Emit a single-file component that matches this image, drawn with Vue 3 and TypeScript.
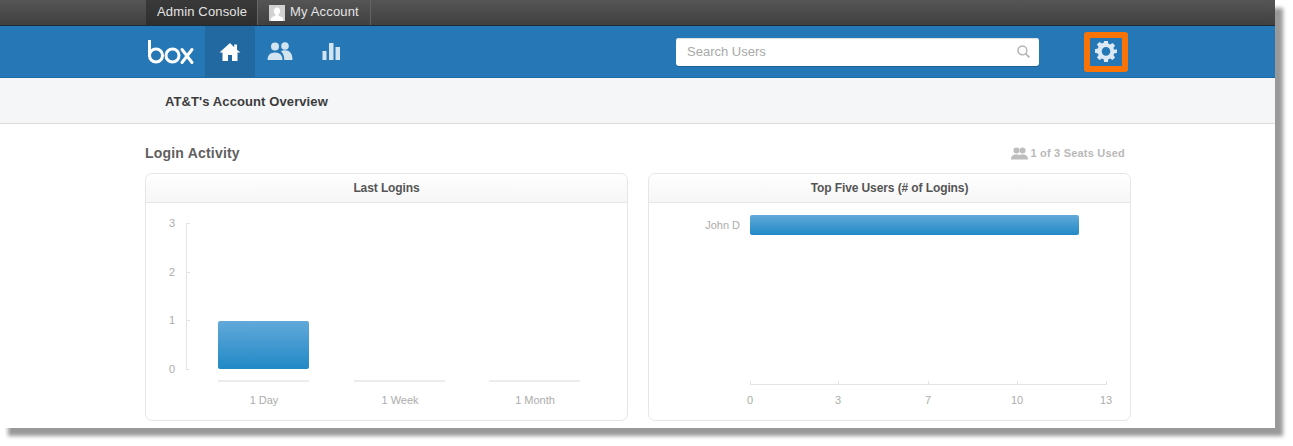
<script setup lang="ts">
// coordinates inside each chart svg (481 x 217)
const yTicks = [
  { label: '3', y: 20 },
  { label: '2', y: 69 },
  { label: '1', y: 117 },
  { label: '0', y: 166 },
]
const columns = [
  { label: '1 Day', x: 72, value: 1 },
  { label: '1 Week', x: 208, value: 0 },
  { label: '1 Month', x: 343, value: 0 },
]
const xTicks = [
  { label: '0', x: 101 },
  { label: '3', x: 189 },
  { label: '7', x: 279 },
  { label: '10', x: 368 },
  { label: '13', x: 457 },
]
</script>

<template>
  <div class="page">
    <div class="window">
      <div class="topbar">
        <a class="tab tab-active">Admin Console</a>
        <a class="tab">
          <svg class="avatar" width="16" height="16" viewBox="0 0 16 16">
            <rect width="16" height="16" fill="#d2d2d2" />
            <path d="M8 2.500c2 0 3.200 1.600 3.200 3.600 0 1.500-.7 2.800-1.600 3.500v1.200c1.700.6 3.400 1.300 4.400 2.200V16H2v-3c1-.9 2.700-1.600 4.400-2.200V9.600C5.500 8.900 4.800 7.600 4.800 6.100 4.800 4.100 6 2.500 8 2.500z" fill="#fff" />
          </svg>
          My Account
        </a>
      </div>

      <header class="nav">
        <svg class="logo" width="48" height="26" viewBox="0 0 48 26" fill="none" stroke="#fff" stroke-width="3">
          <path d="M2.500 1v14" stroke-linecap="round" />
          <circle cx="9" cy="15.500" r="6.500" />
          <circle cx="25.500" cy="15.500" r="6.500" />
          <path d="M35 9.500l10 13M45 9.500l-10 13" stroke-linecap="round" />
        </svg>
        <a class="nav-item nav-item-active">
          <svg width="22" height="20" viewBox="0 0 22 20" fill="#fff">
            <path d="M11 1L0.500 10.500h3V19h5.500v-6h4v6h5.500v-8.500h3L18 7.800V2.500h-2.800v2.800z" />
          </svg>
        </a>
        <a class="nav-item">
          <svg width="26" height="19" viewBox="0 0 26 19" fill="#d3e4f1">
            <circle cx="8" cy="4.500" r="4" />
            <circle cx="18" cy="4" r="3.800" />
            <path d="M0.500 18c0-4.500 2.500-7.500 7.500-7.500s7.500 3 7.500 7.500z" />
            <path d="M14 9.300c1-.8 2.400-1.100 4-1.100 5 0 7.500 3.300 7.500 9.800h-8.200c0-3.600-1.100-6.700-3.300-8.700z" />
          </svg>
        </a>
        <a class="nav-item nav-item-bars">
          <svg width="20" height="19" viewBox="0 0 20 19" fill="#d3e4f1">
            <rect x="1.500" y="9" width="4" height="9" />
            <rect x="8" y="1" width="4.500" height="17" />
            <rect x="14.500" y="5" width="4.500" height="13" />
          </svg>
        </a>

        <div class="search">
          <span>Search Users</span>
          <svg width="13" height="13" viewBox="0 0 14 14" fill="none" stroke="#b5b5b5" stroke-width="1.600">
            <circle cx="5.800" cy="5.800" r="4.800" />
            <path d="M9.300 9.300l4 4" stroke-width="2" />
          </svg>
        </div>

        <div class="gear-box">
          <svg width="22" height="22" viewBox="0 0 24 24" fill="#dce9f4">
            <path fill-rule="evenodd" d="M10 1h4l.6 3.200 1.800.8 2.700-1.800 2.800 2.800-1.800 2.700.8 1.800L24 10v4l-3.100.6-.8 1.800 1.800 2.700-2.800 2.800-2.700-1.800-1.800.8L14 24h-4l-.6-3.100-1.800-.8-2.700 1.800-2.800-2.800 1.800-2.700-.8-1.800L0 14v-4l3.100-.6.800-1.800-1.800-2.700 2.800-2.800 2.700 1.800 1.800-.8zM12 7.700a4.700 4.700 0 1 0 0 9.400 4.700 4.700 0 0 0 0-9.400z" />
          </svg>
        </div>
      </header>

      <div class="subhead">AT&amp;T's Account Overview</div>

      <main class="content">
        <div class="section-head">
          <h2>Login Activity</h2>
          <div class="seats">
            <svg width="17" height="13" viewBox="0 0 17 13" fill="#bdbdbd">
              <circle cx="5.500" cy="3.500" r="3" />
              <circle cx="11.500" cy="3.500" r="3" />
              <path d="M0 12.500c0-3 1.500-5 5.500-5 1 0 1.900.1 2.600.4.700-.3 2.400-.4 3.400-.4 4 0 5.500 2 5.500 5z" />
            </svg>
            1 of 3 Seats Used
          </div>
        </div>

        <div class="cards">
          <section class="card">
            <div class="card-title">Last Logins</div>
            <svg class="chart" width="481" height="217" viewBox="0 0 481 217">
              <path class="axis" d="M44 20h-4v146h4M40 69h4M40 117h4" />
              <text v-for="t in yTicks" :key="t.label" class="tick" x="26" :y="t.y + 4" text-anchor="middle">{{ t.label }}</text>
              <g v-for="c in columns" :key="c.label">
                <rect v-if="c.value" :x="c.x" :y="166 - c.value * 48" width="91" :height="c.value * 48" rx="2" fill="url(#barV)" />
                <rect :x="c.x" y="177" width="91" height="2" fill="#ececec" />
                <text class="tick" :x="c.x + 46" y="201" text-anchor="middle">{{ c.label }}</text>
              </g>
              <defs>
                <linearGradient id="barV" x1="0" y1="0" x2="0" y2="1">
                  <stop offset="0" stop-color="#62a9da" />
                  <stop offset="1" stop-color="#2189c6" />
                </linearGradient>
              </defs>
            </svg>
          </section>

          <section class="card">
            <div class="card-title">Top Five Users (# of Logins)</div>
            <svg class="chart" width="481" height="217" viewBox="0 0 481 217">
              <text class="tick" x="91" y="26" text-anchor="end">John D</text>
              <rect x="101" y="12" width="329" height="20" rx="2" fill="url(#barH)" />
              <path class="axis" d="M101 178v3h356v-3M189 178v3M279 178v3M368 178v3" />
              <text v-for="t in xTicks" :key="t.label" class="tick" :x="t.x" y="201" text-anchor="middle">{{ t.label }}</text>
              <defs>
                <linearGradient id="barH" x1="0" y1="0" x2="0" y2="1">
                  <stop offset="0" stop-color="#62a9da" />
                  <stop offset="1" stop-color="#2189c6" />
                </linearGradient>
              </defs>
            </svg>
          </section>
        </div>
      </main>
    </div>
  </div>
</template>

<style>
html,
body {
  margin: 0;
  background: #fff;
}
</style>

<style scoped>
.page {
  width: 1293px;
  height: 446px;
  overflow: hidden;
}

.window {
  width: 1275px;
  height: 428px;
  overflow: hidden;
  background: #fff;
  box-shadow: 8px 8px 4px #999;
  font-family: "Liberation Sans", Arial, sans-serif;
}

.topbar {
  display: flex;
  box-sizing: content-box;
  height: 25px;
  padding-left: 146px;
  background: linear-gradient(#555, #404040);
  border-bottom: 1px solid #1c2b36;
}

.tab {
  display: flex;
  align-items: center;
  gap: 5px;
  padding: 0 11px 2px 11px;
  font-size: 13px;
  letter-spacing: 0.15px;
  color: #e4e4e4;
  border-right: 1px solid #626262;
}

.tab-active {
  padding-right: 10px;
  background: linear-gradient(#3a3a3a, #2e2e2e);
  border-right: 1px solid #666;
}

.avatar {
  flex: none;
  margin-top: 2px;
}

.nav {
  display: flex;
  align-items: stretch;
  height: 51px;
  padding-left: 147px;
  background: #2578b5;
  border-bottom: 1px solid #1f6aa3;
}

.logo {
  align-self: center;
  margin-top: 2px;
  margin-right: 10px;
}

.nav-item {
  display: flex;
  align-items: center;
  justify-content: center;
  width: 50px;
}

.nav-item-active {
  background: #2269a1;
}

.nav-item-bars svg {
  margin-left: 1px;
}

.search {
  display: flex;
  align-items: center;
  justify-content: space-between;
  align-self: center;
  box-sizing: border-box;
  width: 363px;
  height: 28px;
  margin-left: 321px;
  padding: 0 9px 1px 11px;
  background: #fff;
  border-radius: 3px;
  box-shadow: inset 0 1px 1px #ddd, 0 1px 0 #1c5f93;
  font-size: 13px;
  color: #a9a9a9;
}

.gear-box {
  display: flex;
  align-items: center;
  justify-content: center;
  align-self: center;
  box-sizing: border-box;
  width: 44px;
  height: 40px;
  margin-left: 45px;
  padding-bottom: 1px;
  border: 6px solid #f97306;
  border-radius: 3px;
}

.subhead {
  box-sizing: border-box;
  height: 46px;
  padding: 16px 0 0 165px;
  background: #f5f6f8;
  border-bottom: 1px solid #dcdcdc;
  font-size: 13px;
  font-weight: 700;
  letter-spacing: 0.1px;
  line-height: 16px;
  color: #3c3c3c;
}

.content {
  padding: 19px 144px 0 145px;
}

.section-head {
  display: flex;
  align-items: center;
  justify-content: space-between;
  height: 20px;
  padding-right: 6px;
  margin-bottom: 10px;
}

h2 {
  margin: 0;
  font-size: 14px;
  font-weight: 700;
  letter-spacing: 0.2px;
  color: #5f5f5f;
}

.seats {
  display: flex;
  align-items: center;
  gap: 3px;
  font-size: 11px;
  font-weight: 700;
  letter-spacing: 0.2px;
  color: #b9b9b9;
}

.cards {
  display: grid;
  grid-template-columns: 483px 483px;
  gap: 20px;
}

.card {
  box-sizing: border-box;
  height: 248px;
  background: #fff;
  border: 1px solid #e6e6e6;
  border-radius: 7px;
}

.card-title {
  box-sizing: border-box;
  height: 29px;
  background: linear-gradient(#fff, #f6f6f6);
  border-bottom: 1px solid #e6e6e6;
  border-radius: 7px 7px 0 0;
  font-size: 12px;
  font-weight: 700;
  letter-spacing: -0.1px;
  line-height: 28px;
  text-align: center;
  color: #555;
}

.chart {
  display: block;
}

.axis {
  fill: none;
  stroke: #e4e4e4;
  stroke-width: 1;
  shape-rendering: crispEdges;
}

.tick {
  font-size: 11px;
  fill: #acacac;
}
</style>
